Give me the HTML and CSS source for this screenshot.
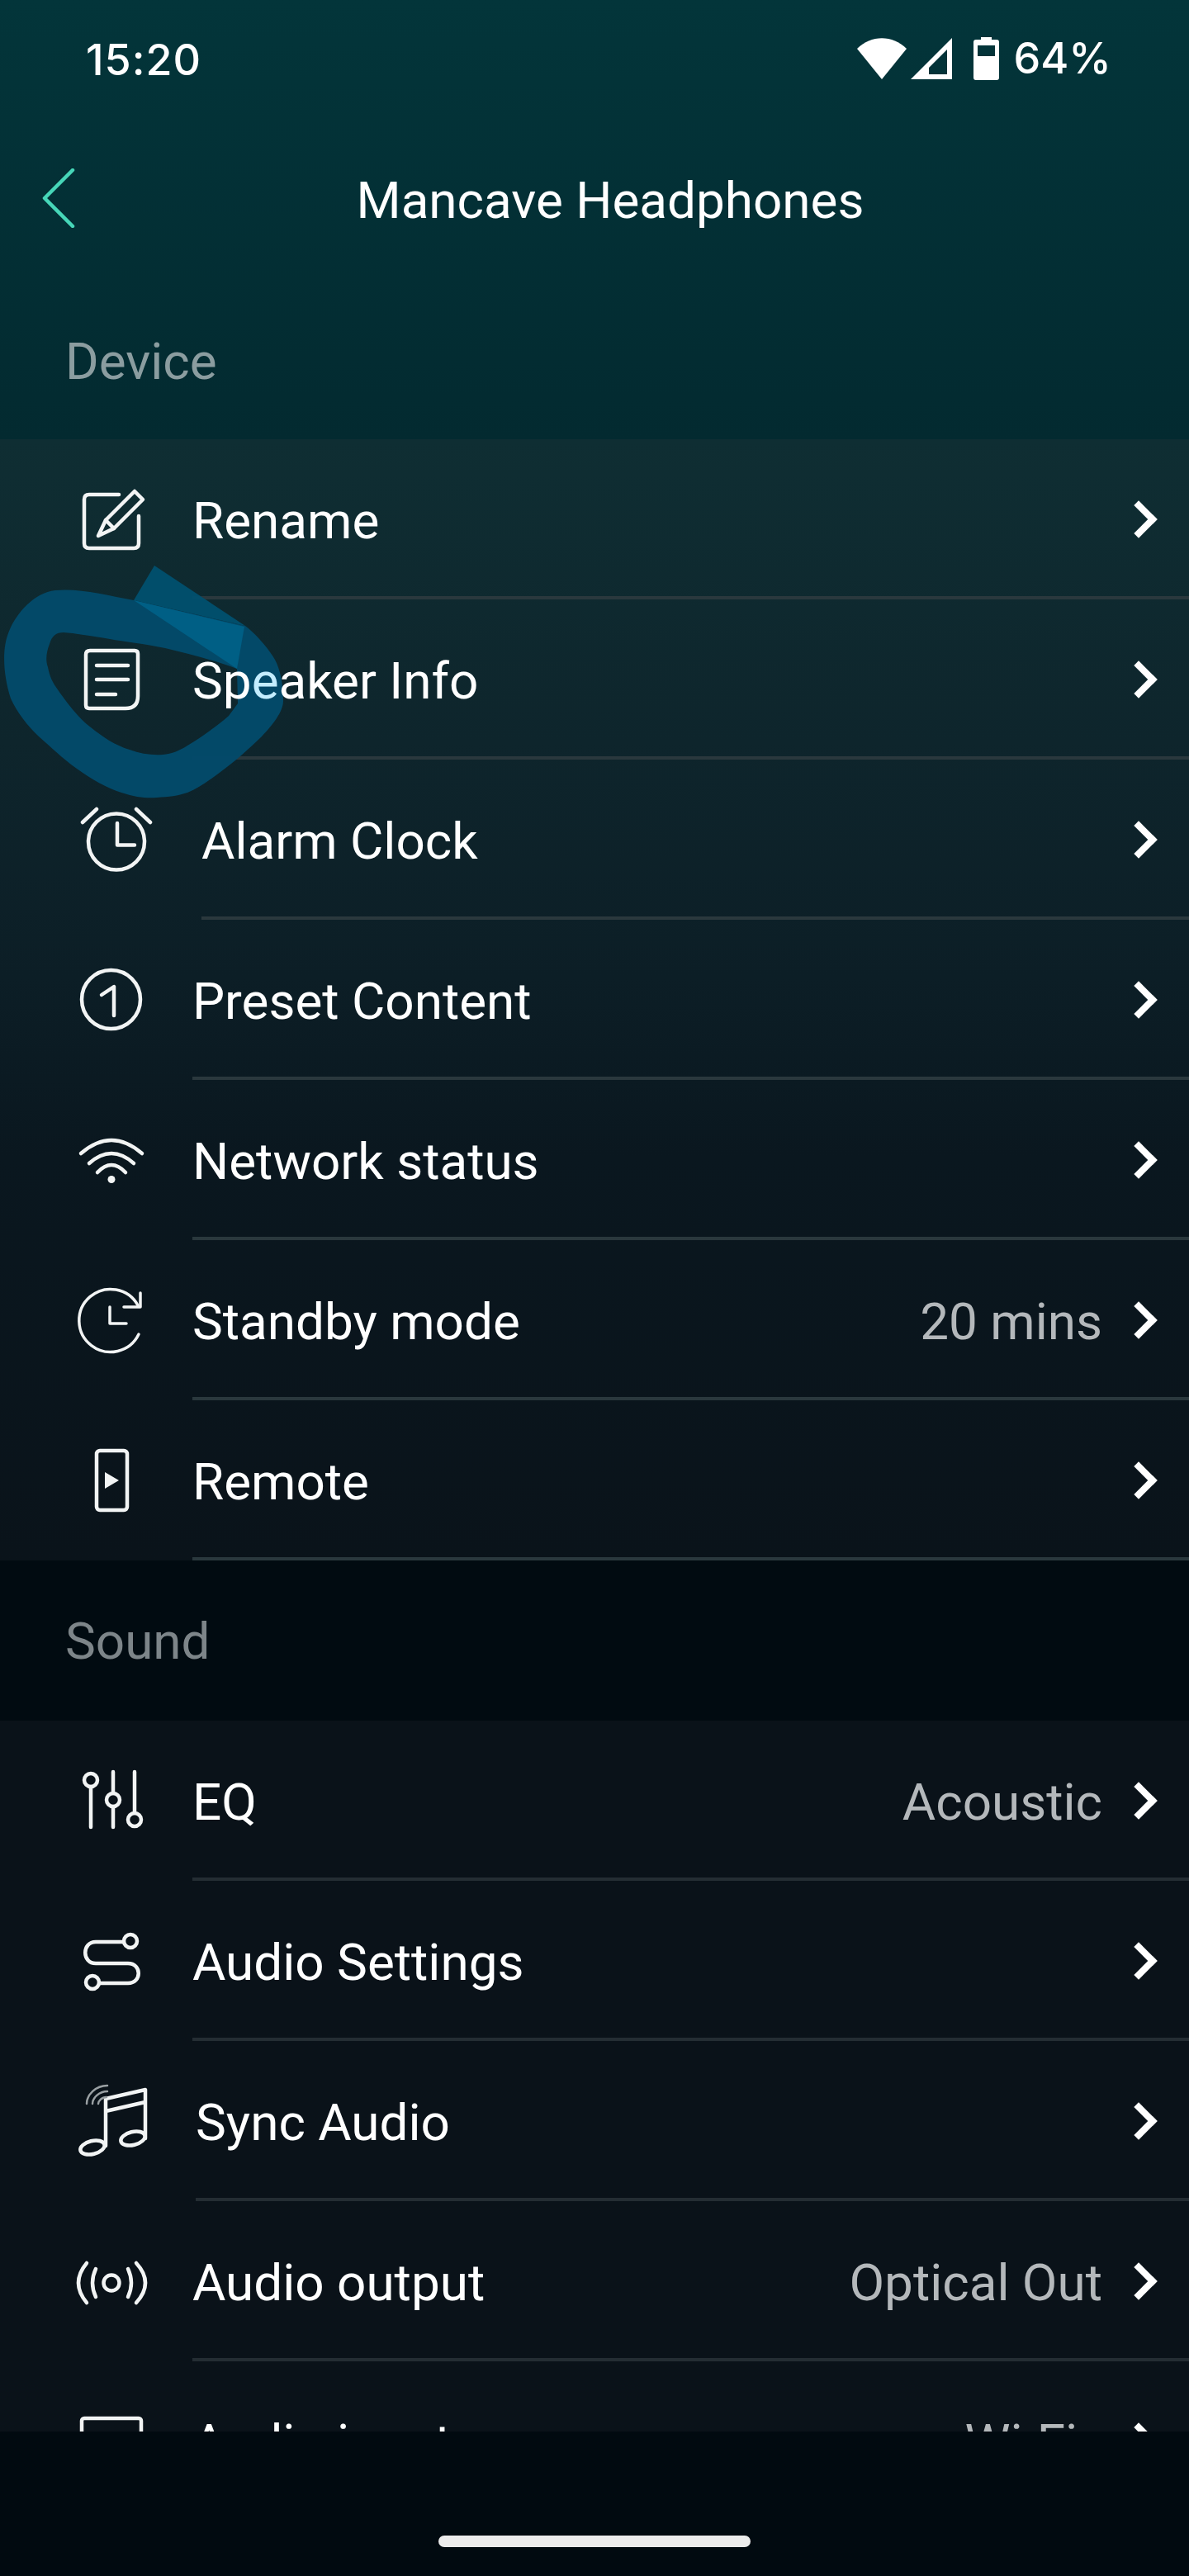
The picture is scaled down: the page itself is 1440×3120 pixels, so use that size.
FILE: index.html
```html
<!DOCTYPE html>
<html lang="en">
<head>
  <meta charset="UTF-8">
  <meta name="viewport" content="width=device-width, initial-scale=1.0">
  <title>Mancave Headphones</title>
  <link rel="stylesheet" href="styles.css">
</head>
<body>
<div class="screen">

  <div class="status-bar">
    <span class="clock">15:20</span>
    <div class="status-right">
      <svg class="st-wifi" viewBox="0 0 60 50"><path d="M0 13C17 -4 43 -4 60 13L30 50Z" fill="#fff"/></svg>
      <svg class="st-signal" viewBox="0 0 50 50"><path d="M50 0V50H0ZM44 14L22 36V44H44Z" fill="#fff" fill-rule="evenodd"/></svg>
      <svg class="st-battery" viewBox="0 0 32 52"><path d="M9 0H22V3H28Q31 3 31 6V49Q31 52 28 52H3Q0 52 0 49V6Q0 3 3 3H9ZM5 10V23H26V10Z" fill="#fff" fill-rule="evenodd"/></svg>
      <span class="battery-text">64%</span>
    </div>
  </div>

  <div class="title-bar">
    <svg class="back" viewBox="0 0 42 72"><path d="M38 2L4 36L38 70" fill="none" stroke="#46d6b8" stroke-width="4.5" stroke-linecap="round" stroke-linejoin="round"/></svg>
    <span class="title">Mancave Headphones</span>
  </div>

  <div class="section-head device-head">Device</div>

  <div class="list list-device">
    <div class="row">
      <svg class="icon" viewBox="0 0 80 80"><path d="M48 8H12Q6 8 6 14V67Q6 73 12 73H66Q72 73 72 67V34" /><path d="M23 58L32 39L67 4L77 14L42 49Z" /><path d="M32 39L42 49" /></svg>
      <span class="label">Rename</span>
      <span class="chev"></span>
    </div>
    <div class="row">
      <svg class="icon" viewBox="0 0 80 80"><path d="M13 3H67Q71 3 71 7V58Q71 73 56 73H12Q8 73 8 69V8Q8 3 13 3Z" /><path d="M21 21H59M21 38H59M21 56H44" /></svg>
      <span class="label">Sp<span class="tint">e</span>aker Info</span>
      <span class="chev"></span>
    </div>
    <div class="row row-alarm">
      <svg class="icon" viewBox="0 0 80 80"><circle cx="45" cy="40.5" r="34" /><path d="M46 18V44.5H67M4 17L21 1M69 1L86 17" /></svg>
      <span class="label">Alarm Clock</span>
      <span class="chev"></span>
    </div>
    <div class="row">
      <svg class="icon" viewBox="0 0 80 80"><circle cx="38.5" cy="37.5" r="35.5" /><path d="M27 32L42 22V57" /></svg>
      <span class="label">Preset Content</span>
      <span class="chev"></span>
    </div>
    <div class="row">
      <svg class="icon" viewBox="0 0 80 80"><path d="M2 30Q39 -2 76 30M12 42Q39 18 66 42M22 53Q39 35 56 53" /><circle class="dot" cx="39" cy="61.5" r="4.5" /></svg>
      <span class="label">Network status</span>
      <span class="chev"></span>
    </div>
    <div class="row">
      <svg class="icon icon-thin" viewBox="0 0 80 80"><path d="M71 20A38 38 0 1 0 72 55" /><path d="M74 5V22H54M37 22V42H57" /></svg>
      <span class="label">Standby mode</span>
      <span class="value">20 mins</span>
      <span class="chev"></span>
    </div>
    <div class="row">
      <svg class="icon" viewBox="0 0 80 80"><rect x="21" y="2" width="37" height="72" rx="4" /><path class="dot" d="M31 28L48 38L31 48Z" /></svg>
      <span class="label">Remote</span>
      <span class="chev"></span>
    </div>
  </div>

  <div class="section-head sound-head">Sound</div>

  <div class="list list-sound">
    <div class="row">
      <svg class="icon" viewBox="0 0 80 80"><circle cx="14" cy="13" r="8" /><path d="M14 21V70M41 3V29" /><circle cx="41" cy="37" r="8" /><path d="M41 45V70M67 3V53" /><circle cx="67" cy="61" r="8" /></svg>
      <span class="label">EQ</span>
      <span class="value">Acoustic</span>
      <span class="chev"></span>
    </div>
    <div class="row">
      <svg class="icon" viewBox="0 0 80 80"><circle cx="62" cy="14" r="8" /><path d="M54 15H20C3 15 3 41 20 41H59C76 41 76 65 59 65H24" /><circle cx="16" cy="64" r="8" /></svg>
      <span class="label">Audio Settings</span>
      <span class="chev"></span>
    </div>
    <div class="row row-sync">
      <svg class="icon" viewBox="0 0 80 80"><ellipse cx="16" cy="70" rx="15" ry="8" transform="rotate(-14 16 70)" /><ellipse cx="65" cy="59" rx="15" ry="8" transform="rotate(-14 65 59)" /><path d="M32 68V11L80 0V59M32 26L80 15" /><path class="thin" d="M9 17C9 6 20 -5 34 -5M16 17C16 10 24 2 34 2M23 17C23 14 27 9 33 9" /></svg>
      <span class="label">Sync Audio</span>
      <span class="chev"></span>
    </div>
    <div class="row">
      <svg class="icon" viewBox="0 0 80 80"><circle cx="39" cy="40" r="9.5" /><path d="M20 23Q12 40 20 57M59 23Q67 40 59 57M9 16Q-11 40 9 64M69 16Q91 40 69 64" /></svg>
      <span class="label">Audio output</span>
      <span class="value">Optical Out</span>
      <span class="chev"></span>
    </div>
    <div class="row">
      <svg class="icon" viewBox="0 0 80 80"><rect x="3" y="10" width="72" height="60" rx="3" /></svg>
      <span class="label">Audio input</span>
      <span class="value value-wifi">Wi-Fi</span>
      <span class="chev"></span>
    </div>
  </div>

  <!-- the blue scribble somebody drew on the screenshot -->
  <svg class="scribble" viewBox="0 680 360 300">
    <path class="scrib-tip" d="M162 727L187 685L297 758Z" />
    <path class="scrib-band" fill-rule="evenodd" d="M162 727C130 721 95 712 67 715C40 718 18 745 10 767C3 785 3 815 13 846C20 862 34 880 47 892C62 905 75 918 93 931C110 943 130 955 147 960C165 966 178 967 190 966C205 965 215 964 227 960C240 955 252 946 267 935C285 922 300 908 317 892C330 878 343 862 343 849C343 830 340 812 333 799C325 785 310 768 297 758ZM77 766C68 766 63 770 60 780C56 790 55 800 58 808C60 820 65 828 67 831C80 850 95 870 110 881C125 893 140 903 157 908C170 913 185 915 197 914C208 913 218 909 227 903C245 892 262 880 277 867L288 852L287 810C260 800 230 792 200 785C175 780 150 777 133 774C110 770 90 767 77 766Z" />
    <path class="scrib-fold" d="M162 727L296 759L287 810Z" />
  </svg>

  <div class="nav-bar"><div class="home-pill"></div></div>
</div>
</body>
</html>
```

FILE: styles.css
```css
* {
  box-sizing: border-box;
}

body {
  margin: 0;
  background: #010a10;
  font-family: "Roboto", "Liberation Sans", sans-serif;
}

.screen {
  position: relative;
  width: 1440px;
  height: 3120px;
  overflow: hidden;
  background: linear-gradient(180deg, #03353a 0, #032a30 532px, #0a1219 100%);
  color: #fff;
}

/* status bar */
.status-bar {
  height: 144px;
  padding: 0 94px 0 104px;
  display: flex;
  align-items: flex-start;
  justify-content: space-between;
}

.clock {
  margin-top: 50px;
  font-size: 52px;
  line-height: 46px;
  letter-spacing: 1px;
  font-family: "Inter", "Roboto", sans-serif;
  font-weight: 500;
}

.status-right {
  margin-top: 45px;
  display: flex;
  align-items: center;
}

.st-wifi {
  width: 60px;
  height: 50px;
}

.st-signal {
  width: 50px;
  height: 50px;
  margin-left: 5px;
}

.st-battery {
  width: 32px;
  height: 52px;
  margin-left: 26px;
}

.battery-text {
  margin-left: 16px;
  font-size: 52px;
  line-height: 50px;
  font-family: "Inter", "Roboto", sans-serif;
  font-weight: 500;
}

/* title */
.title-bar {
  position: relative;
  height: 198px;
  display: flex;
  align-items: center;
  justify-content: center;
  padding-left: 218px;
  padding-right: 180px;
}

.back {
  position: absolute;
  left: 50px;
  top: 60px;
  width: 42px;
  height: 72px;
}

.title {
  font-size: 62px;
  line-height: 70px;
}

.section-head {
  padding-left: 79px;
  font-size: 62px;
  display: flex;
  align-items: center;
}

.device-head {
  height: 190px;
  color: #8b9da0;
}

.sound-head {
  height: 194px;
  background: #010b11;
  color: #7d8589;
}

.list-device {
  background: linear-gradient(180deg, #0f2e33 0%, #0e252c 27%, #0c1e26 48%, #0a171f 64%, #0a131a 100%);
}

.list-sound {
  background: #0a1219;
}

.row {
  position: relative;
  height: 194px;
  display: flex;
  align-items: center;
  padding-left: 233px;
  padding-right: 36px;
}

/* divider starts at the label, not at the screen edge */
.row::after {
  content: "";
  position: absolute;
  left: 233px;
  right: 0;
  bottom: 0;
  height: 4px;
  background: #2a383d;
}

.list-sound .row::after {
  background: #242d33;
}

.row-alarm {
  padding-left: 244px;
}

.row-alarm::after {
  left: 244px;
}

.row-sync {
  padding-left: 237px;
}

.row-sync::after {
  left: 237px;
}

.icon {
  position: absolute;
  left: 96px;
  top: 59px;
  z-index: 2;
  width: 80px;
  height: 80px;
  overflow: visible;
  fill: none;
  stroke: #f2f4f4;
  stroke-width: 4.5;
  stroke-linecap: round;
  stroke-linejoin: round;
}

.icon-thin {
  stroke-width: 3.5;
}

.icon .dot {
  fill: #f2f4f4;
  stroke: none;
}

.icon .thin {
  stroke: #9aa0a3;
  stroke-width: 2.5;
}

.label {
  position: relative;
  z-index: 2;
  flex: 1;
  margin-top: 4px;
  font-size: 62px;
  line-height: 70px;
}

.tint {
  color: #c4edff;
}

.value {
  margin-top: 4px;
  margin-right: 28px;
  font-size: 62px;
  line-height: 70px;
  color: #b4b8bb;
}

.value-wifi {
  margin-right: 58px;
}

.chev {
  width: 32px;
  height: 32px;
  margin-right: 9px;
  border-top: 8px solid #fff;
  border-right: 8px solid #fff;
  transform: rotate(45deg);
}

/* sits between the list backgrounds and the row contents */
.scribble {
  position: absolute;
  left: 0;
  top: 680px;
  z-index: 1;
  width: 360px;
  height: 300px;
}

.scrib-band {
  fill: #034a6a;
  fill-opacity: 0.97;
}

.scrib-tip {
  fill: #01506f;
  fill-opacity: 0.95;
}

.scrib-fold {
  fill: #005f85;
}

.nav-bar {
  position: absolute;
  left: 0;
  right: 0;
  bottom: 0;
  z-index: 3;
  height: 175px;
  background: #010a10;
}

.home-pill {
  position: absolute;
  left: 531px;
  top: 126px;
  width: 378px;
  height: 14px;
  border-radius: 7px;
  background: #ececec;
}
```
